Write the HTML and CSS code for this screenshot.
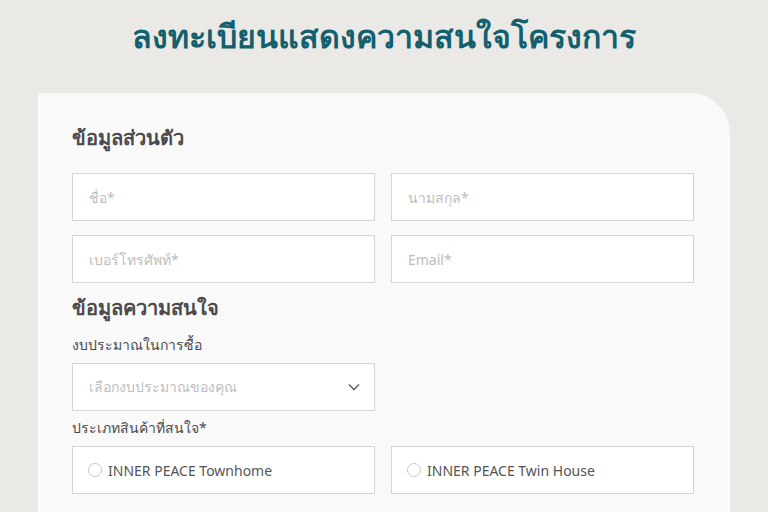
FILE: index.html
```html
<!DOCTYPE html>
<html lang="th">
<head>
    <meta charset="UTF-8">
    <meta name="viewport" content="width=device-width, initial-scale=1.0">
    <title>ลงทะเบียนแสดงความสนใจโครงการ</title>
    <link rel="stylesheet" href="styles.css">
</head>
<body>
    <h1 class="page-title">ลงทะเบียนแสดงความสนใจโครงการ</h1>
    <form class="register-card">
        <h2 class="section-title">ข้อมูลส่วนตัว</h2>
        <div class="field-grid">
            <input class="field" type="text" placeholder="ชื่อ*">
            <input class="field" type="text" placeholder="นามสกุล*">
            <input class="field" type="tel" placeholder="เบอร์โทรศัพท์*">
            <input class="field" type="email" placeholder="Email*">
        </div>

        <h2 class="section-title interest">ข้อมูลความสนใจ</h2>
        <label class="field-label">งบประมาณในการซื้อ</label>
        <div class="field-grid">
            <div class="field select-box">
                <span class="placeholder">เลือกงบประมาณของคุณ</span>
                <svg class="chevron" width="12" height="8" viewBox="0 0 12 8">
                    <path d="M1 1.5 L6 6.5 L11 1.5" fill="none" stroke="#555" stroke-width="1.3"/>
                </svg>
            </div>
        </div>

        <label class="field-label">ประเภทสินค้าที่สนใจ*</label>
        <div class="field-grid">
            <label class="field radio-box">
                <span class="radio"></span>
                INNER PEACE Townhome
            </label>
            <label class="field radio-box">
                <span class="radio"></span>
                INNER PEACE Twin House
            </label>
        </div>
    </form>
</body>
</html>
```

FILE: styles.css
```css
body {
    margin: 0;
    background-color: #ebe9e6;
    font-family: "Noto Sans", "Open Sans", sans-serif;
    color: #4a4a4a;
}
.page-title {
    margin: 0;
    padding-top: 14px;
    text-align: center;
    font-size: 32px;
    font-weight: 700;
    line-height: 44px;
    color: #125f6e;
}
.register-card {
    margin: 35px 0 0 38px;
    width: 692px;
    box-sizing: border-box;
    padding: 30px 36px 20px 34px;
    background-color: #f9f9f9;
    border-top-right-radius: 40px;
}
.section-title {
    margin: 0 0 20px;
    font-size: 20px;
    font-weight: 700;
    line-height: 30px;
    color: #4a4a4a;
}
.section-title.interest {
    margin-top: 10px;
    margin-bottom: 12px;
}
.field-label {
    display: block;
    font-size: 14px;
    line-height: 20px;
    color: #4a4a4a;
    margin-bottom: 8px;
}
.field-grid {
    display: grid;
    grid-template-columns: 1fr 1fr;
    gap: 14px 16px;
    margin-bottom: 7px;
}
.field {
    height: 48px;
    box-sizing: border-box;
    border: 1px solid #d4d4d4;
    background: #fff;
    padding: 0 16px;
    font-family: inherit;
    font-size: 14px;
    color: #4a4a4a;
    outline: none;
}
.field::placeholder {
    color: #bdbdbd;
}
.select-box {
    display: flex;
    align-items: center;
    justify-content: space-between;
    padding-right: 14px;
}
.placeholder {
    color: #bdbdbd;
}
.radio-box {
    display: flex;
    align-items: center;
    gap: 6px;
    padding-left: 15px;
    color: #555;
}
.radio {
    width: 12px;
    height: 12px;
    border: 1px solid #c8c8c8;
    border-radius: 50%;
    background: #fff;
}
```
